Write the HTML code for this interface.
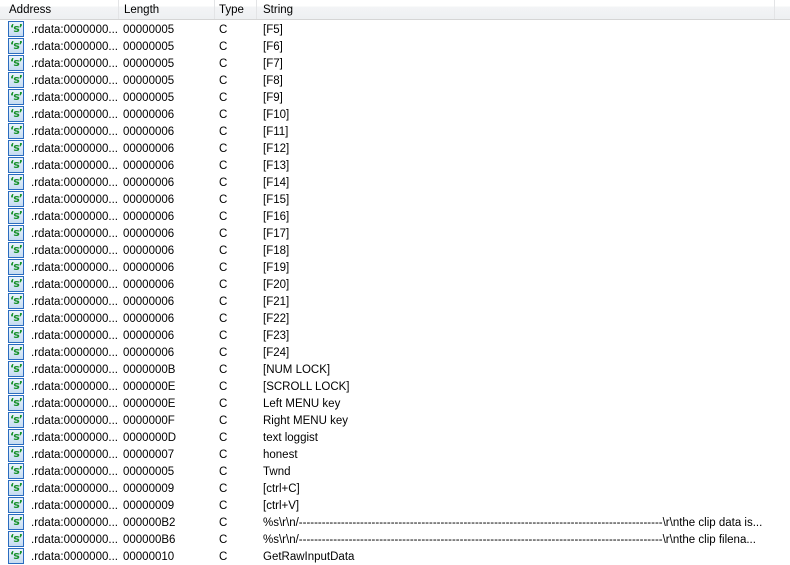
<!DOCTYPE html>
<html><head><style>
body{margin:0;width:790px;height:565px;background:#fff;overflow:hidden;font-family:"Liberation Sans",sans-serif;font-size:11.5px;color:#000;position:relative}
.hdr{position:absolute;left:0;top:0;width:790px;height:19px;background:linear-gradient(#fff 0,#fff 6px,#f3f4f6 7px,#eef0f2 18px);border-bottom:1px solid #d5d5d5}
.hdr span{position:absolute;top:4px}
.sep{position:absolute;top:0;width:1px;height:19px;background:#e3e4e6}
.row{position:absolute;left:0;height:17px;width:790px}
.row span{position:absolute;top:3px;white-space:nowrap}
.ic{position:absolute;left:8px;top:0;width:14px;height:14px;border:1px solid #2a6cc0;background:linear-gradient(#eaf3fb,#c6dcf1);font-family:"DejaVu Sans",sans-serif;font-weight:bold;font-size:11px;color:#16902a;text-align:center;line-height:13px;letter-spacing:-1px}
</style></head><body>
<div class="hdr">
<span style="left:9px">Address</span>
<div class="sep" style="left:118px"></div>
<span style="left:124px">Length</span>
<div class="sep" style="left:214px"></div>
<span style="left:219px">Type</span>
<div class="sep" style="left:256px"></div>
<span style="left:263px">String</span>
<div class="sep" style="left:774px"></div>
</div>
<div id="rows"></div>
<script>
var d=[["05","[F5]"],["05","[F6]"],["05","[F7]"],["05","[F8]"],["05","[F9]"],["06","[F10]"],["06","[F11]"],["06","[F12]"],["06","[F13]"],["06","[F14]"],["06","[F15]"],["06","[F16]"],["06","[F17]"],["06","[F18]"],["06","[F19]"],["06","[F20]"],["06","[F21]"],["06","[F22]"],["06","[F23]"],["06","[F24]"],["0B","[NUM LOCK]"],["0E","[SCROLL LOCK]"],["0E","Left MENU key"],["0F","Right MENU key"],["0D","text loggist"],["07","honest"],["05","Twnd"],["09","[ctrl+C]"],["09","[ctrl+V]"],["B2","%s\\r\\n/"+"-".repeat(95)+"\\r\\nthe clip data is..."],["B6","%s\\r\\n/"+"-".repeat(95)+"\\r\\nthe clip filena..."],["10","GetRawInputData"]];
var h="";
d.forEach(function(r,i){
var t=r[1].replace(/&/g,"&amp;").replace(/</g,"&lt;");
h+='<div class="row" style="top:'+(21+i*17)+'px"><div class="ic">\u2018s\u2019</div><span style="left:31px">.rdata:0000000...</span><span style="left:123px">000000'+r[0]+'</span><span style="left:219px">C</span><span style="left:263px">'+t+'</span></div>';
});
document.getElementById("rows").innerHTML=h;
</script>
</body></html>
